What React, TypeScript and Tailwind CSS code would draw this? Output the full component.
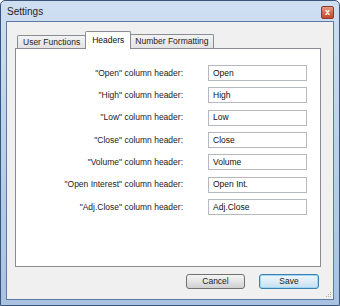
import React from "react";

const rows: [string, string][] = [
  ['"Open" column header:', "Open"],
  ['"High" column header:', "High"],
  ['"Low" column header:', "Low"],
  ['"Close" column header:', "Close"],
  ['"Volume" column header:', "Volume"],
  ['"Open Interest" column header:', "Open Int."],
  ['"Adj.Close" column header:', "Adj.Close"],
];

export default function App() {
  return (
    <div
      className="w-[340px] h-[306px] flex flex-col border border-[#3b5479] rounded-t-[5px] bg-gradient-to-b from-[#cfdff2] via-[#b9cfea] to-[#a9c2e2] text-black"
      style={{ fontFamily: '"Liberation Sans", Arial, sans-serif' }}
    >
      <div className="h-[20px] flex items-center justify-between pl-[6px] pr-[5px] shrink-0">
        <span className="text-[10px] text-[#1e1e1e] mt-[1px]">Settings</span>
        <div className="w-[13px] h-[13px] mt-[2px] rounded-[2px] border border-[#8a3b2c] bg-gradient-to-b from-[#e69b85] via-[#d26a50] to-[#c5492f] flex items-center justify-center">
          <span className="text-[9px] leading-none font-bold text-white">x</span>
        </div>
      </div>
      <div className="flex-1 mx-[5px] mb-[5px] border border-[#5d7aa3] bg-[#f0f0f0] flex flex-col relative">
        <div className="ml-[8px] mt-[9px] w-[306px]">
          <div className="flex items-end h-[17px] pl-[2px]">
            <div className="h-[13px] px-[5px] border border-[#898c95] border-b-0 rounded-t-[2px] bg-gradient-to-b from-[#f3f3f3] to-[#e3e3e3] flex items-center text-[8.5px] text-[#222]">
              User Functions
            </div>
            <div className="h-[18px] -mb-[1px] px-[6px] border border-[#898c95] border-b-0 rounded-t-[2px] bg-white flex items-start pt-[2px] text-[8.5px] text-[#111] relative z-10 -ml-[1px]">
              Headers
            </div>
            <div className="h-[14px] px-[4px] border border-[#898c95] border-b-0 border-l-0 rounded-tr-[2px] bg-gradient-to-b from-[#f3f3f3] to-[#e3e3e3] flex items-center text-[8.5px] text-[#222]">
              Number Formatting
            </div>
          </div>
          <div className="h-[219px] border border-[#898c95] bg-white flex flex-col gap-[6.33px] pt-[16px]">
            {rows.map(([label, value]) => (
              <div key={label} className="flex items-center h-[16px]">
                <div className="w-[167px] text-right text-[8.5px] text-[#222]">{label}</div>
                <div className="ml-[25px] w-[99px] h-[16px] border border-[#b5b8bf] bg-white flex items-center pl-[4px] text-[8.5px] text-[#111]">
                  {value}
                </div>
              </div>
            ))}
          </div>
        </div>
        <div className="flex justify-end gap-[14px] mt-[7px] pr-[14px]">
          <div className="w-[59px] h-[15px] rounded-[3px] border border-[#707070] bg-gradient-to-b from-[#f4f4f4] via-[#e4e4e4] to-[#cfcfcf] flex items-center justify-center text-[8.5px] text-[#222]">
            Cancel
          </div>
          <div className="w-[60px] h-[15px] rounded-[3px] border border-[#3c7fb1] shadow-[inset_0_0_0_1px_#9fd5f5] bg-gradient-to-b from-[#eef6fb] via-[#dcecf6] to-[#c4dff0] flex items-center justify-center text-[8.5px] text-[#222]">
            Save
          </div>
        </div>
        <svg className="absolute right-[1px] bottom-[1px]" width="8" height="8" viewBox="0 0 8 8">
          <rect x="6" y="2" width="1" height="1" fill="#b0b0b0" />
          <rect x="4" y="4" width="1" height="1" fill="#b0b0b0" />
          <rect x="6" y="4" width="1" height="1" fill="#b0b0b0" />
          <rect x="2" y="6" width="1" height="1" fill="#b0b0b0" />
          <rect x="4" y="6" width="1" height="1" fill="#b0b0b0" />
          <rect x="6" y="6" width="1" height="1" fill="#b0b0b0" />
        </svg>
      </div>
    </div>
  );
}
